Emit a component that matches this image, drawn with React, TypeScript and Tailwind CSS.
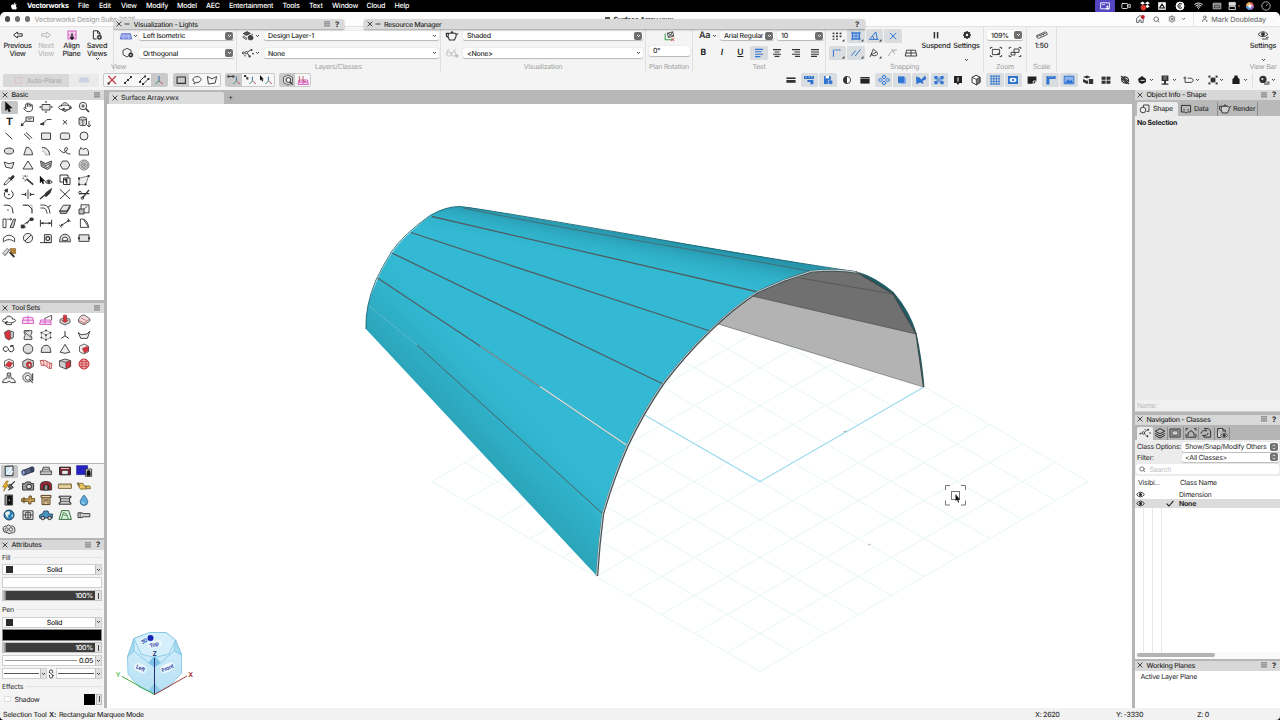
import React from "react";
import { Hand, Search, Wifi, Video, Settings as Gear, User } from "lucide-react";
import { FaApple } from "react-icons/fa";

type Shape = [d: string, fill?: string, stroke?: string, width?: number];

const K = "#333333";
const G = "#dcdcdc";
const N = "none";
const RED = "#d8323f";
const PINK = "#d45fc4";
const BLUE = "#2f74d0";

const c = (x: number, y: number, r: number) =>
  `M${x - r} ${y}a${r} ${r} 0 1 0 ${2 * r} 0a${r} ${r} 0 1 0 ${-2 * r} 0Z`;
const e = (x: number, y: number, a: number, b: number) =>
  `M${x - a} ${y}a${a} ${b} 0 1 0 ${2 * a} 0a${a} ${b} 0 1 0 ${-2 * a} 0Z`;
const r = (x: number, y: number, w: number, h: number) => `M${x} ${y}h${w}v${h}h${-w}Z`;

/* Small drawing on a 16 x 14 board whose origin is the centre */
function Ic({ s, children, className = "" }: { s?: Shape[]; children?: React.ReactNode; className?: string }) {
  return (
    <svg className={"block shrink-0 overflow-visible " + className} width="16" height="14" viewBox="-8 -7 16 14" strokeLinejoin="round">
      {s?.map(([d, f, st, w], i) => (
        <path key={i} d={d} fill={f ?? N} stroke={st ?? K} strokeWidth={w ?? 0.9} />
      ))}
      {children}
    </svg>
  );
}

function Chev({ className = "", color = "#333" }: { className?: string; color?: string }) {
  return (
    <svg className={"block shrink-0 " + className} width="5" height="4" viewBox="0 0 5 4">
      <path d="M1 1l1.5 1.6L4 1" fill="none" stroke={color} strokeWidth="0.9" />
    </svg>
  );
}

const ARROW = "M-3.6 -5.2V3.8L-1.5 2L-.2 5L1.6 4.2L.3 1.4L3.2 1.1Z";
const CUBE = "M0 -5L4.5 -2.8V2.6L0 5L-4.5 2.6V-2.8Z";
const TEAPOT = "M-3.4 -2.8H3L4.2 -1.6L6.2 -2.6M-3.4 -2.8L-5.8 -2.6L-5.4 .6L-3.6 1.4M-3.4 -2.8L-4 .4L-2.6 4H2.4L4 .6L4.2 -1.6M-1.2 -2.8L0 -4.4L1.2 -2.8";

const basic: Shape[][] = [
  [[ARROW, "#111", "#111", 0.3]],
  [],
  [[r(-4, -2.5, 8, 5.5), "#e6e6e6"], ["M0 -6.2l1.3 1.6h-2.6ZM0 6.2l1.3 -1.6h-2.6ZM-7 0l1.8 -1.2v2.4ZM7 0l-1.8 -1.2v2.4Z", K, N]],
  [[e(0, 0.5, 6.5, 2.4), N], ["M-3.8 -.5C-3 -5.5 3 -5.5 3.8 -.5M-3.5 2.5L0 4.6L3.5 2.5", N], ["M-3 2l2.6 -1.4v3ZM6.8 1l-2.6 -1.4l0 3Z", K, N]],
  [[c(-1, -1, 3.7), "#f6f6f6"], ["M1.8 1.8L5 5", N, K, 1.6], ["M-1 -2.8V.8M-2.8 -1H.8"]],
  [],
  [[r(-2, -5, 7.5, 4.4), "#f2f2f2"], ["M-.5 -3.5H4M-.5 -2.2H3", N, K, 0.5], ["M-2 -1.5L-6.5 3.5"], ["M-6.8 4l.4 -2.6l1.8 1.6Z", K]],
  [["M5.5 -2.5H1L-3 1.5"], ["M-5.8 2.2l3.5 -1.6l.2 2.4Z", K]],
  [["M-2.2 -1.8L2.2 2.4M2.2 -1.8L-2.2 2.4", N, K, 1]],
  [["M-5 -3.2C-5 -5.5 2.5 -5.5 2.5 -3.2V2C2.5 4.2 -5 4.2 -5 2Z", "#d4d4d4"], ["M-5 -3.2C-4 -1.5 1.5 -1.5 2.5 -3.2M-1.2 -2V3.6", N, K, 0.7], ["M5 -1V4.6M3 2.8L5 5L7 2.8"]],
  [["M-3.5 -3.2L3.3 3.2", N, K, 1]],
  [["M-4 -2.2L2 3.6M-2 -3.6L4.2 2.4", N, K, 1]],
  [[r(-4.5, -3, 9, 6.4), "#e9e9e9"]],
  [["M-3 -3H3Q4.6 -3 4.6 -1.4V1.8Q4.6 3.4 3 3.4H-3Q-4.6 3.4 -4.6 1.8V-1.4Q-4.6 -3 -3 -3Z", "#e9e9e9"]],
  [[c(0, 0, 4), "#efefef"]],
  [[e(0, 0, 4.6, 3), G]],
  [["M-4.2 3.8L-1.5 -4Q4 -3 4.6 3.8Z", "#e9e9e9"]],
  [["M-4 -3.6C1 -3.4 3.5 0 3.6 4L-.4 4C-.5 1.8 -2 .3 -4 .2", "#ececec", "#999", 0.7], ["M-4 -3.6C1 -3.4 3.5 0 3.6 4"]],
  [["M-5.5 -1.5Q-1 4.5 2 -1Q3.4 -4 .4 -3.2C-1.4 -2.4 0 3.4 5.5 3", N, K, 1]],
  [["M-4.8 4V0L-3 -3.6L-1 -1.4L1 -2.6Q4.8 -3 4.6 4Z", "#efefef"]],
  [["M-4.8 -3L0 -1.2L5 -2.6L3 3.4L-3.2 2.2Z", "#eee"]],
  [["M0 -4L5 4H-5Z", "#efefef"]],
  [["M-5.4 -4L-.4 -1.4L5.5 -4L4.8 2L1.5 4.5L-4.6 1.4Z", "#bdbdbd"], ["M-3.4 -1.6L0 .8L4 -1.4L3.6 1L1.2 2.6L-3 .4Z", "#e8e8e8", K, 0.7]],
  [["M-2.4 -4H2.4L4.8 0L2.4 4H-2.4L-4.8 0Z", "#e9e9e9"]],
  [[c(0, 0, 5), "#e5e5e5", "#666", 0.8], [c(0.3, 0, 3.5), N, "#666", 0.7], [c(0, 0.2, 2.1), N, "#666", 0.7], [c(0.2, 0, 0.8), N, "#666", 0.7]],
  [["M-5 5L-4.3 2.8L.6 -2L2.2 -.4L-2.8 4.4Z", "#fff"], ["M-.5 -3L3 .5M1 -1.4L3.6 -4.4Q5.6 -4.6 5 -2.6L2 0Z", K]],
  [["M-1.5 -1.2L5.2 4.6", N, K, 1.6], ["M-2.8 -5V-3M-2.8 -.6V1.4M-5.6 -1.8H-3.9M-1.6 -3L-.4 -4M-5 -4.4L-4 -3.4", N, K, 0.9]],
  [["M-6 -4V3L-4.4 1.6L-3.2 4L-2 3.4L-3 1H-1Z", "#111", "#111", 0.3], ["M-.8 2Q3 -2 6.4 2Q3 5.4 -.8 2Z", "#fff"], [c(2.8, 1.8, 1.2), K]],
  [["M-5 -5H3V-2M-5 -5V2H-2", N, K, 1], [r(-1.5, -2, 6.5, 6.5), "#fff", K, 1], ["M-.5 -1L2 3.6V-1Z", K]],
  [["M-5 4.6V-1.8L4.6 -4L3 1L1.2 4.6Z", "#eee", "#777", 0.9], [r(-6, -2.6, 2, 2), K, N], [r(-6, 3.4, 2, 2), K, N], [r(3.6, -5, 2, 2), K, N], [r(0.6, 3.4, 2, 2), K, N]],
  [["M-2.8 -3.2A4.4 4.4 0 1 0 2 -3.4", N, K, 1], ["M-1.6 -5.2L-1.6 -1.8L-4.6 -3.6Z", K], [c(0, 0.5, 0.5), K]],
  [["M0 -4.5V5", N, K, 0.9], ["M-1.8 -1.8V2.6L-4.2 .4ZM1.8 -1.8V2.6L4.2 .4Z", K, N], ["M-6.4 .4H-4M4 .4H6.4", N, K, 1]],
  [["M5.6 -5.4L.2 -1.4L-2 1.6L.4 2.4L4 -1Z", K], ["M-2 1.4L-6 5", N, K, 1.4]],
  [["M-5 -4.6L5 5M5 -4.6L-5 5", N, K, 1]],
  [["M-5 -.4H5.4M-1.6 4L5 -4", N, K, 1.2], [c(-4, -1.4, 1.3)], [c(-1.6, 4, 1.3)]],
  [["M-5.2 -3.8H-1Q3.8 -3.6 4 4.4", N, K, 1], [c(-1, 1, 0.3), K]],
  [["M-5.2 -3.8H4V4.4", N, "#999", 0.7], ["M-5.2 -3.8H0L4 0V4.4", N, K, 1]],
  [["M-5.6 -4H-2Q3.4 -3.6 4 4.6M-5.6 -1H-2Q.6 -.6 1.2 4.6", N, K, 0.9], ["M1.6 -1.4L5 -4", N, K, 1]],
  [["M-5.4 2L-1.6 -3.8H5.2L2 2.2Z", "#e6e6e6"], ["M-5.4 2L-4.6 4.4H1.4L4.8 -1.2L5.2 -3.8L2 2.2H-5.4", "#bbb"]],
  [[r(-3, -4.2, 8, 8), "#f4f4f4"], [r(-5, 0, 5, 5), "#bdbdbd"], ["M0 0L3.4 -2.8", N, K, 0.8]],
  [[r(-6, -4, 3, 8.6), "#fff"], ["M1 4.6L4.6 -3.8H6.6L4.4 4.6Z", "#ccc"], ["M-2 -3.8H2.6M1.2 -5L2.8 -3.8L1.2 -2.6", N, K, 0.8]],
  [["M-6 4H-2M-1.4 1.2L2 -3.8H6", N, K, 0.9], [r(-6.8, 2, 3, 3), K], [r(2.2, -5, 2.6, 2.6), K], ["M-3.6 1L1.4 -2.4", N, K, 1]],
  [["M-5.6 -3.2V3.6M5.6 -3.2V3.6M-5 .2H5", N, K, 1], ["M-5 .2l2.4 -1.4v2.8ZM5 .2l-2.4 -1.4v2.8Z", K, N]],
  [["M-5.6 1.8L-3.4 4.6M2.8 -4.4L5.6 -1M-4 2.6L4 -2.6", N, K, 1], ["M-4.4 3l1 -2.6l1.6 2ZM4.4 -3l-1 2.6l-1.6 -2Z", K, N]],
  [["M-3.6 -4V4.4H4.6L-.6 -4Q3.8 -2 4.6 4.4", N, K, 0.9], ["M-3.6 -4H-1"]],
  [["M-5.6 4.2V0Q0 -5.6 5.6 0V4.2", N, K, 0.9], ["M-4.8 3.2Q0 0 4.8 3.2", N, K, 0.9]],
  [[c(0, 0, 4.6), "#eee"], ["M-3 3L3 -3", N, K, 1]],
  [["M-6 4.6H5M-1.6 4V-3.4H4.4Q5.4 -3.4 5.4 -2V4.6H-1.6Z", "#e5e5e5"], [c(1.8, 0.6, 1.9), "#fff", K, 1.2]],
  [["M-5.4 3.8Q-5.4 -3.8 0 -3.8T5.4 3.8Z", "#ddd"], ["M-2.8 2.4Q-2.8 -1 0 -1T2.8 2.4Z", "#fff"]],
  [[r(-5, -3.2, 10, 6.6), "#e2e2e2"], [r(-6, -0.8, 2, 2), K, N], [r(4, -0.8, 2, 2), K, N]],
  [["M-6.4 1.5L-2 -3.6L.4 -1.6L-3.6 3.4ZM-4.5 3.8L1.8 -3.8", "#ddd", "#777"], [r(1.6, -3.4, 5, 5), "#b68436", "#7c5a24", 0.6], ["M.6 .2L5.4 5", N, K, 1.8]],
];

const sets: Shape[][] = [
  [[e(0, 0.6, 6.6, 2.2)], ["M-3.6 -.8C-3.4 -5 3.4 -5 3.6 -.8M-2.6 2.8V4.6H2.6V2.8", "#eee"], ["M-1.6 1L-4 4Z", K]],
  [["M-4.6 -2.6H4.6L5.8 3.4H-5.8ZM-5.2 .2H5.2M0 -4.6V3.4", "#fbe6f6", PINK, 1]],
  [["M-5.4 0H4.2L5.4 4.4H-6.4ZM-5.8 2H5M-1 -2V4.4", "#fbe6f6", PINK, 1], ["M-1.6 -1.4L3.4 -3.8L5.6 -4.6V.4", N, "#555", 1]],
  [["M-5 -.6L0 -2.6L5 -.6V2.6L0 5L-5 2.6Z", "#ccc", "#555"], ["M-1.6 -4.8H1.6V.4H3L0 2.6L-3 .4H-1.6Z", RED, "#822", 0.5]],
  [["M-5.6 0Q-4 -5.4 .8 -4.8L5.8 -1.2V1L0 4.8L-5.4 2Z", "#f4dada", "#555"], ["M-5 .6L.2 3L5.2 -.6M0 2.8V4.6M-3 -2L2.4 .6", N, "#a55", 0.7]],
  [["M-4.6 -2.6L-.6 -4.8L4.6 -2.8L4.2 2.6L-.2 5L-3.4 3Z", RED, "#555"], ["M1.2 -4L4.6 -2.8L4.2 2.6L2 3.8Z", "#ccc", "#555", 0.7]],
  [["M-3.8 -4.4H3.8V-2Q1.6 0 3.8 2.4V4.6H-3.8V2Q-1.8 0 -3.8 -2.2Z", "#ddd", "#444"], ["M-3.6 -3L3.6 2.8M-3.6 -4L1 -4", N, "#444", 0.8]],
  [["M-4.6 -2.4L0 -4.6L4.6 -2.4V2.6L0 4.8L-4.6 2.6ZM-4.6 -2.4L0 0L4.6 -2.4M0 0V4.8", "#f4f4f4", "#777", 0.7], [c(-4.6, -2.4, 0.9), K, N], [c(4.6, -2.4, 0.9), K, N], [c(0, -4.6, 0.9), K, N], [c(0, 4.8, 0.9), K, N], [c(-4.6, 2.6, 0.9), K, N], [c(4.6, 2.6, 0.9), K, N], [c(0, 0, 0.9), K, N]],
  [["M0 -4V.8L-3.8 3.4M0 .8L3.8 3.4", N, K, 1]],
  [["M-5.8 -2.4L-2.8 -.2L3 -1L5.8 -3.8L3.4 3.4H-3.2Z", "#eee"]],
  [["M-1.4 1.4A2.4 2.4 0 1 1 -1.6 -1.6C-.6 -1 -.6 1 .4 2.2A2.8 2.8 0 1 0 1 -2.6Q2.4 -4.6 5 -3", N, K, 1]],
  [[c(0, 0, 4.8), "#ddd"], ["M-4 2.4Q0 5.4 4 2.4", N, "#999", 0.7]],
  [["M-4.8 3.4Q-4.8 -3.8 0 -3.8T4.8 3.4Z", "#ddd"]],
  [["M0 -4.6L4.8 3.2Q0 5.4 -4.8 3.2Z", "#eee"]],
  [[CUBE, "#eee", "#555"], ["M-1.6 -.6L3.2 -2.6L4.4 -1V1.6L.4 4Z", RED, "#822", 0.5]],
  [[CUBE, "#eee", "#555"], ["M-3.6 1.4L-.6 -2.6L3.8 -1L.8 3.4Z", RED, "#822", 0.5]],
  [["M-5.4 -2.4L-.4 -5.2L5.4 -3.2V2.4L.8 5L-5 2.8Z", "#ccc", "#444"], [e(1, 0.8, 2.6, 3), RED, "#822", 0.6], [e(1.4, 1, 1.2, 1.6), "#eee", "#822", 0.5]],
  [["M-6 -3.4Q-1 -4.6 1.4 -2.4T6 -.6Q5 2.4 5.4 4.6Q2 4.6 .6 2.6T-4.8 1.4Q-4.6 -1 -6 -3.4Z", "#f9dede", "#a33", 0.8], ["M-3 -3.8Q-2 -1 -2 1.6M.6 -3Q1.4 -.4 1 2.6M3.6 -1.2Q3.6 2 3.4 4.2", N, "#c33", 0.7]],
  [["M-5.6 -3.2L0 -5L5.6 -3.4V2.4L1 5L-5.4 2.4Z", "#ccc", "#444"], ["M.8 -1.8L5.6 -3.4V2.4L1 5Z", RED, "#444", 0.6], ["M-5.6 -3.2L.8 -1.8", N, "#444", 0.7]],
  [[c(0, 0, 5), "#f3b1b1", "#c2333a", 1], ["M-5 0H5M-4.2 -2.4H4.2M-4.2 2.4H4.2M-2 -4.6V4.6M2 -4.6V4.6", N, "#c2333a", 0.8]],
  [["M-6.4 4.6Q-5.8 .4 -2.4 .4Q-1.6 -1 -1.6 -5H1.6Q1.6 -1 2.4 .4Q5.8 .4 6.4 4.6H2.2Q0 2 -2.2 4.6Z", "#eee"], ["M0 -3.4V.6", N, K, 1]],
  [[c(-0.6, -0.6, 4.6), "#ddd", "#555"], [c(-0.2, -0.2, 2.4), "#fff", "#555"], ["M1.2 1.4L4.8 4.8M4.6 -4.8V3", N, "#555", 1.2]],
];

const lower: Shape[][] = [
  [["M-3.8 -4.6L4 -5V4.6H-3.8Z", "#cfe6f3", "#333", 1], ["M-2 3L2.6 -4M1 4L4 0", N, "#fff", 1.2]],
  [["M-6 0L3.6 -4L5.6 .4L-3.6 4Z", "#5a6586", "#26304a"], [e(-4.4, 1.6, 1.8, 2.6), "#8fa0cc", "#26304a"], [e(4.4, -1.6, 1.6, 2.6), "#3a4670", "#26304a"]],
  [["M-5.6 2.6V0H-3.6L-2.8 -3.8H3.2L4 0H5.6V3.6H-5.6Z", "#c8c8c8", "#444"], ["M-4 -1.4H4M-5.6 .8H5.6", N, "#666", 0.8]],
  [[r(-5.4, -3.8, 10.8, 7.6), "#8f1f2a", "#222", 1], [r(-3.2, -0.6, 6.4, 4), "#eee", "#222", 0.7], ["M-4 -2.4H4", N, "#eecccc", 1]],
  [[r(-7.4, -5.4, 11, 9), "#2622c4", "#1a1790", 0.6], [r(1.6, -2, 6, 7.4), "#e9e9e9", "#222", 0.8], [c(4.6, 1, 1.6), "#111", "#111"], [r(3, 2, 3.2, 2.4), "#111", "#111"]],
  [["M-2.6 -5L-6.4 1H-3.8L-5.4 5.2L-.4 -1.4H-2.8L-.6 -5Z", "#f0b429", "#7c5a10", 0.6], ["M5.8 -4.6L2 -1M-.6 4.4L2.4 1.4", N, K, 1.1], ["M1 -2L4.4 1.4L1.6 3.4L-.8 .8Z", "#666"]],
  [["M-5.4 -2.4H-2.8L-1.8 -4H2.4L3 -2.4H5.6V4H-5.4Z", "#9a9a9a", "#333", 1], [c(1, 0.6, 2.4), "#ddd", "#222", 1]],
  [["M-5.6 4V-1.4Q-5 -4.4 0 -4.4T5.6 -1.4V4Z", "#9b2530", "#333", 0.9], [r(-2.4, -1, 5, 5), "#555", "#222"], ["M0 -1V4", N, "#ddd", 0.8]],
  [[r(-6.6, -2, 13, 4.4), "#ead7a4", "#6e5a30", 0.9], ["M-4 -2V0M-1 -2V0M2 -2V0M5 -2V0", N, "#6e5a30", 0.5]],
  [["M-6.6 -2.8L-1 -2.6L0 0H5.8L6.6 2.6L-3.4 3.2L-5.6 0Z", "#ecc65c", "#6e5a20", 0.8], ["M-6.6 -3.4L-3.8 0M2 0V2.6", N, "#444", 0.9]],
  [[r(-4, -5, 7.6, 10), "#9a9a9a", "#333"], [r(-1.4, -4, 4, 8.4), "#111", "#111"], ["M-.2 .2H1", N, "#fff", 1]],
  [["M-6.4 -1.2H1V-4H3.4V-1.4H6.6V1.6H3V4H.6V1.6H-6.4Z", "#c39a4f", "#5a431c", 0.8], ["M-4 -3V3.4", N, "#5a431c", 1]],
  [["M-5 -4.6H5V-2.6H4V4.6H-4V-2.6H-5Z", "#e6cfa2", "#5d4523", 1], ["M-4 -2.4H4M-2 -2V4M2 -2V4M0 -1.6L0 2.4M-1.4 0H1.4", N, "#5d4523", 0.8]],
  [["M-6 -3.8H6V-2.4H4.6V2.8H6V4.2H-6V2.8H-4.6V-2.4H-6Z", "#d2d2d2", K, 1], ["M-4.6 -1.2H4.6M-4.6 1.4H4.6", N, K, 0.7]],
  [["M0 -5Q4.2 .2 3.8 1.8A3.8 3.6 0 0 1 -3.8 1.8Q-4.2 .2 0 -5Z", "#59a9d9", "#2d5f85", 0.8], ["M-1.8 1.6Q-1.4 3.4 .4 3.8", N, "#d4ecfa", 0.9]],
  [[c(0, 0, 5), "#2c81b8", "#244560", 1], ["M-4 -1.8Q-1.4 -4.6 1 -3.2L.4 -.6L-1.4 .4L-.2 3.6L-2.6 1.6ZM2.2 .6L4 -.8L3.4 2.6Z", "#e7f2e4", N]],
  [[r(-5, -4.2, 10, 8.6), "#e5e5e5", "#444", 1], ["M0 -4.2V4.4M-5 0H5M-2.6 -2.4H2.6V2.8H-2.6Z", N, "#444", 0.9]],
  [["M-6.4 3V0L-3.6 -1.2L-2 -4H2L3 -1H6.4V3Z", "#4b93bf", "#264a62", 0.9], [c(-3.2, 3, 1.8), "#ccc", "#222"], [c(3.6, 3, 1.8), "#ccc", "#222"]],
  [["M-3.4 -4.4H3.8L6.4 4.4H-6Z", "#e3f1e3", "#3e6f45", 1], ["M-3.6 4.2L-1.6 -2.6L1.6 -1L3.4 4.2M-1.8 -.2L2 .8", N, "#4b9658", 1]],
  [["M-6 -2.2H-1.6V-1.4H5.8V1.8H-1.6V2.6H-6Z", "#d7d7d7", "#444", 1], ["M-3.8 -2.2V2.6", N, "#444", 0.8]],
  [["M-6 0Q-5.4 -3.6 -2.4 -2.8Q-.6 -5.6 1.8 -2.8Q5.6 -3.4 5.8 .4Q6.6 4.4 2.6 3.8Q.2 5.6 -2 3.6Q-6 3.8 -6 0Z", "#e2e2e2", "#444", 1], [c(-2.4, 0.4, 1.6), N, "#444", 0.8], [c(1.8, 0.4, 1.8), N, "#444", 0.8]],
];

function ToolGrid({ icons, selected, kind }: { icons: Shape[][]; selected?: number; kind: string }) {
  return (
    <div className="grid w-[93px] grid-cols-5">
      {icons.map((s, i) => (
        <div key={i} className="flex h-[14.5px] w-[18.6px] items-center justify-center">
          <div className={"flex h-[13.5px] w-[17.5px] items-center justify-center rounded-[1.5px] " + (i === selected ? "bg-[#c3c5c6]" : "")}>
            {kind === "basic" && i === 1 ? (
              <Hand size={10.5} strokeWidth={2} color={K} />
            ) : kind === "basic" && i === 5 ? (
              <span className="font-['Liberation_Sans',sans-serif] text-[10.5px] leading-none font-bold text-[#222]">T</span>
            ) : (
              <Ic s={s} />
            )}
          </div>
        </div>
      ))}
    </div>
  );
}

const X_D = "M-2.4 -2.4L2.4 2.4M2.4 -2.4L-2.4 2.4";

function Close({ minus = false }: { minus?: boolean }) {
  return (
    <svg className="block shrink-0" width={minus ? 15 : 6} height="6" viewBox={minus ? "-3 -3 15 6" : "-3 -3 6 6"}>
      <path d={X_D + (minus ? "M5.5 0h5" : "")} fill="none" stroke="#333" strokeWidth="0.9" />
    </svg>
  );
}

function Bars() {
  return (
    <svg className="block shrink-0" width="6" height="6" viewBox="0 0 6 6">
      <path d="M0 .9H6M0 2.9H6M0 4.9H6" stroke="#555" strokeWidth="0.8" />
    </svg>
  );
}

function Header({ title, help = true }: { title: string; help?: boolean }) {
  return (
    <div className="flex h-[10px] shrink-0 items-center bg-[#d8d8d8] pr-[4px] pb-[0.5px] pl-[2px]">
      <Close />
      <span className="ml-[3.5px] grow text-[7px] font-medium text-[#2c2c2c]">{title}</span>
      <Bars />
      {help && <span className="ml-[5px] text-[7.5px] font-bold text-[#222]">?</span>}
    </div>
  );
}

function Field({ w, children, end = "box" }: { w: string; children: React.ReactNode; end?: "box" | "plain" | "none" }) {
  return (
    <div className={"flex h-[9.5px] shrink-0 items-center rounded-[2px] bg-white pl-[4px] text-[7px] text-[#2b2b2b] shadow-[0_0.5px_1px_rgba(0,0,0,0.25)] " + w}>
      <span className="grow font-medium">{children}</span>
      {end === "box" && (
        <span className="mr-[1px] flex size-[8px] items-center justify-center rounded-[2px] bg-[#6f6f6f]">
          <Chev color="#fff" />
        </span>
      )}
      {end === "plain" && <Chev className="mr-[2px]" />}
    </div>
  );
}

function Group({ w, label, children, line = true }: { w: string; label: string; children: React.ReactNode; line?: boolean }) {
  return (
    <div className={"flex h-[46px] shrink-0 flex-col " + (line ? "border-r border-[#e0e0e0] " : "") + w}>
      <div className="h-[35px]">{children}</div>
      <div className="text-center text-[7px] leading-[9px] text-[#a0a0a0]">{label}</div>
    </div>
  );
}

function Big({ w, icon, a, b, chev = false, dim = false }: { w: string; icon: React.ReactNode; a: string; b?: string; chev?: boolean; dim?: boolean }) {
  return (
    <div className={"flex shrink-0 flex-col items-center pt-[0.5px] text-[7.3px] leading-[8.4px] font-medium whitespace-nowrap " + (dim ? "text-[#b9b9b9] " : "text-[#2a2a2a] ") + w}>
      {icon}
      <span>{a}</span>
      {b && <span>{b}</span>}
      {chev && <Chev className={b ? "-mt-px" : "mt-[8px]"} />}
    </div>
  );
}

function Cell({ s, on = false, children }: { s?: Shape[]; on?: boolean; children?: React.ReactNode }) {
  return (
    <div className="flex h-[14px] w-[18.55px] shrink-0 items-center justify-center">
      <div className={"flex h-[13.5px] w-[17.5px] items-center justify-center rounded-[1.5px] " + (on ? "bg-[#dadddf]" : "")}>
        {children ?? <Ic s={s} />}
      </div>
    </div>
  );
}

function ModeBox({ items, first, w }: { items: Shape[][]; first: number; w: string }) {
  return (
    <div className="flex h-[14px] items-center overflow-hidden rounded-[2px] border border-[#c9c9c9] bg-[#f7f7f7]">
      {items.map((s, i) => (
        <div key={i} className={"flex h-full items-center justify-center " + w + (i === first ? " bg-[#c9c9c9]" : "")}>
          <Ic s={s} />
        </div>
      ))}
    </div>
  );
}

const AXES: Shape[] = [["M0 -4V1", N, "#2f6fb0", 1], ["M0 1L-3.6 4", N, "#2f9e6a", 1], ["M0 1L4 4", N, "#c25b6a", 1]];
const SHIFTED: Shape[] = [["M2.4 -3.4V1", N, "#2f6fb0", 1], ["M2.4 1L-.6 4", N, "#2f9e6a", 1], ["M2.4 1L6 4", N, "#c25b6a", 1]];
const TRI: Shape = ["M5 5.4L7.4 5.4L7.4 3Z", K, N];

const menu: [string, string][] = [
  ["Vectorworks", "w-[51px] font-bold"], ["File", "w-[21px]"], ["Edit", "w-[22px]"], ["View", "w-[25px]"], ["Modify", "w-[31px]"],
  ["Model", "w-[29px]"], ["AEC", "w-[23px]"], ["Entertainment", "w-[53.5px]"], ["Tools", "w-[26.5px]"], ["Text", "w-[23px]"],
  ["Window", "w-[34.5px]"], ["Cloud", "w-[28px]"], ["Help", "w-[20px]"],
];

function MenuBar() {
  return (
    <div className="flex h-[12px] items-center bg-black pb-[0.5px] pl-[9.5px] text-[7.1px] font-medium text-white">
      <FaApple size={8} className="mr-[9.5px]" />
      {menu.map(([t, w]) => (
        <span key={t} className={"shrink-0 whitespace-nowrap " + w}>{t}</span>
      ))}
      <div className="ml-auto flex items-center pr-[6px]">
        <div className="flex h-[12px] w-[20px] items-center justify-center rounded-[1px] bg-[#5346c2]">
          <Ic s={[["M-4.4 -3.2H4.4V2.8H-4.4Z", N, "#fff", 0.9], [c(2.4, 0.4, 1), "#fff", N], [r(1, 1.6, 3, 1.8), "#fff", N], ["M-3 -1.4H0", N, "#fff", 0.7]]} />
        </div>
        <div className="flex w-[22px] justify-center"><Video size={10} strokeWidth={2} /></div>
        <div className="flex w-[15px] justify-center">
          <Ic s={[["M-2.4 -4.4L0 -2.8L-2.4 -1.2L-4.8 -2.8ZM2.4 -4.4L4.8 -2.8L2.4 -1.2L0 -2.8ZM2.4 -1.2L4.8 .4L2.4 2L0 .4Z", "#fff", N], [c(-1.6, 1.6, 2.8), "#d8382c", N]]} />
        </div>
        <div className="flex w-[20px] justify-center"><Ic s={[[r(-3.8, -3.8, 7.6, 7.6), "#fff", N], ["M0 -2L2.4 2H-2.4Z", "#fff", "#111", 1.2]]} /></div>
        <div className="flex w-[15px] justify-center"><Ic s={[[c(0, 0, 4), "#fff", "#fff"], ["M2 -1.8A2.4 2.4 0 1 0 2 1.6M0 -1.4V1.4", N, "#111", 1]]} /></div>
        <div className="flex w-[22px] justify-center"><Wifi size={9} strokeWidth={2.6} /></div>
        <div className="flex w-[15px] justify-center"><Ic s={[[r(-3.8, -2.8, 7.6, 5.6), "#333", "#ddd", 0.8], ["M-3.8 -1.2H3.8M-2.4 .8H2.4", N, "#ddd", 0.8]]} /></div>
        <div className="flex w-[18px] justify-center">
          <Ic s={[["M-4 -3.6H2.4V-.6H-4Z", "#ddd", "#fff", 0.6], ["M-4 .6H2.4V3.6H-4Z", N, "#fff", 0.8], [c(6, 0, 0.8), "#f08a24", N]]} />
        </div>
        <div className="flex w-[16px] justify-center">
          <Ic s={[[c(0, 0, 3.8), "#d66", N], ["M0 0L-3.8 0A3.8 3.8 0 0 1 0 -3.8Z", "#f2b04c", N], ["M0 0L3.8 0A3.8 3.8 0 0 1 0 3.8Z", "#8a6bd8", N], ["M0 0L0 3.8A3.8 3.8 0 0 1 -3.8 0Z", "#4aa5e8", N], [c(0, 0, 1.7), "#fff", N]]} />
        </div>
        <div className="flex w-[16px] justify-center"><Ic s={[[c(0, 0, 4.2), N, "#bbb", 0.9], ["M0 0L1.8 -2", N, "#bbb", 0.9]]} /></div>
      </div>
    </div>
  );
}

function TitleBar() {
  return (
    <div className="relative z-10 flex h-[14px] items-center rounded-tl-[5px] rounded-tr-[5px] bg-[#fcfcfc] pl-[4.5px]">
      <div className="flex gap-[4.5px]">
        <span className="size-[5.5px] rounded-full bg-[#4b4b4b]" />
        <span className="size-[5.5px] rounded-full bg-[#6e6e6e]" />
        <span className="size-[5.5px] rounded-full bg-[#6e6e6e]" />
      </div>
      <span className="ml-[4.5px] w-[570px] text-[7.2px] font-medium text-[#aaaaaa]">Vectorworks Design Suite 2025</span>
      <span className="flex items-center text-[7px] font-bold text-[#333]">
        <span className="mr-[4px] h-[5px] w-[5px] bg-[#555]" />
        Surface Array.vwx
      </span>
      <div className="ml-auto flex items-center text-[7px] text-[#555]">
        <div className="flex w-[17px] justify-center">
          <Ic s={[["M-3.4 3.4V-.6L0 -3.6L3.2 -.6V3.4H1V1H-1V3.4Z", N, "#555", 0.9], [c(2.8, -2, 2), "#c21f30", N]]} />
        </div>
        <div className="flex w-[15px] justify-center"><Search size={7} strokeWidth={2.6} /></div>
        <div className="flex w-[17px] justify-center"><Gear size={8} strokeWidth={2.4} /></div>
        <Chev color="#666" />
        <div className="ml-[7px] h-[14px] w-px bg-[#e4e4e4]" />
        <User size={7.5} strokeWidth={2.4} className="ml-[7px]" />
        <span className="ml-[3px] pr-[14px] text-[7.2px] font-medium tracking-[-0.12px] text-[#777]">Mark Doubleday</span>
      </div>
      <div className="absolute top-[7px] left-[114px] flex h-[10px] w-[230px] items-center rounded-t-[2px] bg-[#d9d9d9] pr-[5px] pl-[2px] text-[7px] font-medium text-[#2b2b2b] shadow-[0_1px_2px_rgba(0,0,0,0.35)]">
        <Close minus />
        <span className="ml-[2.5px] grow">Visualization - Lights</span>
        <Bars />
        <span className="ml-[5px] text-[7.5px] font-bold">?</span>
      </div>
      <div className="absolute top-[7px] left-[364px] flex h-[10px] w-[501px] items-center rounded-t-[2px] bg-[#d9d9d9] pr-[6px] pl-[3px] text-[7px] font-medium text-[#2b2b2b] shadow-[0_1px_2px_rgba(0,0,0,0.35)]">
        <Close minus />
        <span className="ml-[2px] grow tracking-[-0.35px]">Resource Manager</span>
        <span className="text-[7.5px] font-bold">?</span>
      </div>
    </div>
  );
}

const ALIGN: Shape[][] = [
  [["M-4 -3.6H4M-4 -1.2H2.6M-4 1.2H4M-4 3.6H1.4", N, BLUE, 1.1]],
  [["M-4 -3.4H4M-2.4 -1H2.4M-4 1.2H4M-2.4 3.4H2.4", N, K, 1.1]],
  [["M-4 -3.4H4M-1.6 -1H4M-4 1.2H4M-1 3.4H4", N, K, 1.1]],
  [["M-4 -3.4H4M-4 -1H4M-4 1.2H4M-4 3.4H2", N, K, 1.1]],
];

function Ribbon() {
  return (
    <div className="flex h-[46px] shrink-0 border-t border-[#e2e2e2] bg-[#f4f4f4]">
      <div className="flex w-[114px] border-r border-[#e0e0e0]">
        <Big w="ml-[1px] w-[33px]" a="Previous" b="View" icon={<Ic s={[["M-4.4 0L-.6 -3V-1.2H4.2V1.2H-.6V3Z", N, K, 1]]} />} />
        <Big w="w-[24px]" dim a="Next" b="View" icon={<Ic s={[["M4.4 0L.6 -3V-1.2H-4.2V1.2H.6V3Z", N, "#bbb", 1]]} />} />
        <Big w="w-[27px]" a="Align" b="Plane" icon={<Ic s={[[r(-4, -4, 8, 8), "#fbe0f5", PINK, 1.1], ["M0 -4V-1M-4 0H4", N, PINK, 0.8], ["M0 -1.5V4M-2 1.8L0 4.2L2 1.8", N, "#111", 1.3]]} />} />
        <Big w="w-[24px]" a="Saved" b="Views" chev icon={<Ic s={[["M-3.6 -4.2H.8L3 -2V1M-3.6 -4.2V4H-.4M.6 -4.2V-1.8H3", N, K, 1], [c(2.4, 2.2, 2.2), "#444", K, 0.6], [c(2.4, 2.2, 0.8), "#fff", N]]} />} />
      </div>
      <Group w="w-[123px]" label="">
        <div className="flex h-[17px] items-center pl-[4px]">
          <Ic s={[["M-4.4 -2.4H4.4L5.8 3H-5.8Z", "#8ea0ea", "#5a6fc9", 0.8], ["M-2 -2.4L-2.6 3M2 -2.4L2.6 3M-5 .2H5", N, "#c7d0fa", 0.6]]} />
          <Chev className="mr-[1px] ml-[-1px]" />
          <Field w="w-[95px]">Left Isometric</Field>
        </div>
        <div className="flex h-[18px] items-center pl-[6px]">
          <Ic s={[["M-1 -4.6L3 -2.8V1L-1 4L-5 1.6V-2.6Z", N, K, 0.9], [c(2.8, 2, 2.4), K, N], [c(2.8, 2, 0.8), "#fff", N]]} />
          <Field w="ml-[3px] w-[95px]">Orthogonal</Field>
        </div>
        <div className="ml-[-3px] text-[7px] leading-[9px] text-[#a0a0a0]">View</div>
      </Group>
      <Group w="w-[204px]" label="Layers/Classes">
        <div className="flex h-[17px] items-center pl-[3px]">
          <Ic s={[["M-4.8 -2.4L-1 -4.4L2.4 -2.6L-1.6 -.6Z", "#555", K, 0.8], ["M-4.8 0L-1.6 1.8V3.6L-4.8 1.8Z", "#ddd", K, 0.7], [e(2.6, 1.8, 2.6, 2.2), "#444", K, 0.6], ["M0 1L5 -2", N, K, 0.8]]} />
          <Chev className="mr-[4px] ml-[-1px]" />
          <Field w="w-[175px]" end="plain">Design Layer-1</Field>
        </div>
        <div className="flex h-[18px] items-center pl-[3px]">
          <Ic s={[[c(-4.6, 0, 1), N], [c(-1.6, -0.4, 1.2), N], ["M-.4 -1L2.6 -3M-.4 .4L1.4 3.4"], [c(3.4, -3, 1.1), K, N], [c(1.6, 3.4, 1.1), K, N], [c(5, 0.6, 0.9), K, N], [c(-3, 2.8, 0.7), K, N]]} />
          <Chev className="mr-[4px] ml-[-1px]" />
          <Field w="w-[175px]" end="plain">None</Field>
        </div>
      </Group>
      <Group w="w-[205px]" label="Visualization">
        <div className="flex h-[17px] items-center pl-[3px]">
          <Ic s={[[TEAPOT, N, K, 1.1]]} />
          <Field w="ml-[3px] w-[180px]">Shaded</Field>
        </div>
        <div className="flex h-[18px] items-center pl-[3px]">
          <Ic s={[[c(-3.2, 1, 2.2), N, "#bbb"], [c(1.8, 1, 2.2), N, "#bbb"], ["M-5 -.6L-3.4 -3.8M1.8 -1.2L3.2 -4M-1 1H-.4", N, "#bbb"], [c(4.8, 2.8, 1.6), "#bbb", N]]} />
          <Field w="ml-[3px] w-[180px]" end="plain">&lt;None&gt;</Field>
        </div>
      </Group>
      <Group w="w-[47px]" label="Plan Rotation">
        <div className="flex h-[17px] items-center justify-center">
          <Ic s={[["M-3.8 -2.4V3.8H3.4", N, "#3aa655", 1.1], ["M2 5L5.4 2.2M2.6 2L5 5", N, "#d04545", 0.9], ["M-1.6 -2.8L3.8 -4.2L4.6 .2L-.6 1.4ZM-1.6 -2.8L4.6 .2M3.8 -4.2L-.6 1.4", N, "#444", 0.9]]} />
        </div>
        <Field w="ml-[3px] mt-[2px] w-[41px]" end="none">0°</Field>
      </Group>
      <Group w="w-[133px]" label="Text">
        <div className="flex h-[17px] items-center pl-[6px]">
          <span className="w-[13px] text-[9px] font-semibold text-[#333]">Aa</span>
          <Chev className="mr-[3px]" />
          <Field w="w-[54px]">Arial Regular</Field>
          <Field w="ml-[3px] w-[47px]">10</Field>
        </div>
        <div className="flex h-[18px] items-center pl-[1px] text-[8.5px] text-[#222]">
          <Cell><b>B</b></Cell>
          <Cell><i className="font-semibold">I</i></Cell>
          <Cell><u className="font-semibold">U</u></Cell>
          {ALIGN.map((s, i) => <Cell key={i} on={i === 0} s={s} />)}
        </div>
      </Group>
      <Group w="w-[158px]" label="Snapping">
        <div className="flex">
          <div className="w-[96px] pt-[2px] pl-[2px]">
            <div className="flex">
              <Cell s={[[r(-4.4, -3.4, 1.8, 1.6), K, N], [r(-0.9, -3.4, 1.8, 1.6), K, N], [r(2.6, -3.4, 1.8, 1.6), K, N], [r(-4.4, -0.4, 1.8, 1.6), K, N], [r(-0.9, -0.4, 1.8, 1.6), K, N], [r(2.6, -0.4, 1.8, 1.6), K, N], [r(-4.4, 2.6, 1.8, 1.2), K, N], [r(-0.9, 2.6, 1.8, 1.2), K, N], TRI]} />
              <Cell on s={[[r(-3.6, -3, 7, 6), "#a9c4ee", BLUE, 1], ["M-5 -3H5M-5 3H5M-3.6 -4.4V4.4M3.4 -4.4V4.4M0 -3V3M-3 0H3", N, BLUE, 0.8], TRI]} />
              <Cell on s={[["M-4.6 3.4H4.6M-4.6 3.4L1.8 -4L3.4 3.4M0 3.4Q.4 .6 -2 .4", N, BLUE, 1], TRI]} />
              <Cell on s={[["M-3 -3L3.2 3.2M3.2 -3L-3 3.2", N, BLUE, 1]]} />
            </div>
            <div className="mt-[3px] flex">
              <Cell on s={[["M-3.6 3.8V-3H3.6", N, BLUE, 1], ["M-2 -4.4V-1.6M1 -4V-2", N, "#dadddf", 0.7], TRI]} />
              <Cell on s={[["M-4.6 2.6L-.4 -2.4M-.8 3L4.4 -3.6", N, BLUE, 1], TRI]} />
              <Cell s={[["M-4 4L-.6 -4L4 .6Q1 4.6 -2.8 1.4M-3 2L2.6 -1", N, K, 0.9], TRI]} />
              <Cell s={[["M-4.4 3Q-3 -2.4 4 -3.4M-1 -4L1.6 1", N, "#999", 0.8]]} />
              <Cell s={[["M-4.4 -2.8H4.4L5.8 3H-5.8ZM-5.2 0H5.2M0 -2.8V3", N, K, 0.9]]} />
            </div>
          </div>
          <Big w="w-[28px]" a="Suspend" icon={<Ic s={[["M-1.6 -3V3.2M1.6 -3V3.2", N, K, 1.5]]} />} />
          <Big w="w-[33px]" a="Settings" chev icon={<Ic s={[[c(0, 0, 2.2), N, K, 2], ["M0 -4V-2.4M0 4V2.4M-4 0H-2.4M4 0H2.4M-2.8 -2.8L-1.8 -1.8M2.8 2.8L1.8 1.8M-2.8 2.8L-1.8 1.8M2.8 -2.8L1.8 -1.8", N, K, 1.5]]} />} />
        </div>
      </Group>
      <Group w="w-[43px]" label="Zoom">
        <div className="flex h-[16px] items-center pl-[3px]">
          <Field w="w-[36px]">109%</Field>
        </div>
        <div className="mt-[2px] flex pl-[3px]">
          <Cell s={[[r(-3.6, -2.6, 7.2, 5.2), N, K, 0.9], ["M-5.6 -3V-4.6H-3.6M5.6 -3V-4.6H3.6M-5.6 3V4.6H-3.6M5.6 3V4.6H3.6", N, K, 0.9], ["M1 2.6L3.6 .6", N, K, 1]]} />
          <Cell s={[[r(-1, -3, 5, 3.4), N, K, 0.9], [r(-4, 0.4, 4, 2.6), N, K, 0.9], ["M-5.8 -3V-4.6H-3.8M5.8 -3V-4.6H3.8M-5.8 3V4.6H-3.8M5.8 3V4.6H3.8", N, K, 0.9]]} />
        </div>
      </Group>
      <Group w="w-[30px]" label="Scale">
        <Big w="" a="1:50" icon={<Ic s={[["M-5.4 .6L3.4 -3.2Q5.6 -2.6 5.2 -.4L-3.6 3.4Q-5.6 3 -5.4 .6ZM-5 1.6L4 -2M-1 .2V1.6M1.6 -1V.6", "#fff", K, 0.8]]} />} />
      </Group>
      <div className="ml-auto">
        <Group w="w-[34px]" label="View Bar" line={false}>
          <Big w="" a="Settings" chev icon={<Ic s={[["M-5 -.6Q0 -6 5 -.6Q0 4 -5 -.6Z", N, K, 0.9], [c(0, -0.8, 1.5), K], ["M-1 4H5M3 2.4H5.6", N, K, 0.9]]} />} />
        </Group>
      </div>
    </div>
  );
}

const DOT = (x: number, y: number): Shape => [r(x - 1, y - 1, 2, 2), K, N];
const rightModes: [boolean, Shape[]][] = [
  [false, [["M-4.6 -1.8H4.6", N, K, 1.6], ["M-4.6 1.4H4.6", N, K, 2.8]]],
  [true, [["M-5 -4H5V-1H-5Z", BLUE, N], ["M-1.6 0H4.4V4.2H1.4V2H-1.6Z", BLUE, N], ["M-3 -4V-2M0 -4V-2M3 -4V-2", N, "#dadddf", 0.6]]],
  [true, [["M-4 -4H2L3 -3V0H0V4H-4Z", BLUE, N], [r(-2.4, -4, 3.4, 2.4), "#fff", N], [c(2.4, 2.2, 2.4), BLUE, "#dadddf", 0.6]]],
  [false, [[c(0, 0, 3.6), "#fff", K, 0.9], ["M0 -3.6A3.6 3.6 0 0 0 0 3.6Z", K, N]]],
  [false, [[r(-4.6, -3, 9.2, 6.6), "#222", N], ["M-4.6 -1.6H4.6", N, "#eee", 0.6]]],
  [true, [["M0 -5L2 -3L0 -1L-2 -3ZM0 1L2 3L0 5L-2 3ZM-3.6 -2L-1.4 0L-3.6 2L-5.6 0ZM3.6 -2L5.6 0L3.6 2L1.4 0Z", "#bcd2f3", BLUE, 1]]],
  [true, [[r(-2.6, -2.6, 6.6, 6.6), "#8db2ee", N], [r(-4, -3.6, 6.4, 6.4), BLUE, N]]],
  [true, [["M-5 -3.6L-1.6 -2.4L.4 -.6L4 -4.6L5.4 -1L1.6 1L2.6 4L-1 2.4L-4.6 4.2Z", BLUE, N]]],
  [true, [[r(-4.6, -4, 3.2, 3.2), BLUE, N], [r(1.4, -4, 3.2, 3.2), BLUE, N], [r(-4.6, 1, 3.2, 3.2), BLUE, N], [r(1.4, 1, 3.2, 3.2), BLUE, N], ["M-3 0H3M0 -3V3", N, BLUE, 0.9]]],
  [false, [["M-4 -4H4V3H1.4L0 5L-1.4 3H-4Z", "#222", N], ["M0 -2.6V1.6", N, "#fff", 1]]],
  [false, [["M-4 -2.6L0 -4.8L4 -2.8V2.4L.4 4.8L-4 2.4Z", "#fff", K, 1], ["M.2 -.8L4 -2.8V2.4L.4 4.8Z", "#777", K, 0.8], ["M-4 -2.6L.2 -.8", N, K, 0.8]]],
  [true, [["M-3.8 -5V5M-1.2 -5V5M1.4 -5V5M4 -5V5M-5 -3.8H5M-5 -1.2H5M-5 1.4H5M-5 4H5", N, BLUE, 0.8]]],
  [true, [[r(-5, -4, 10, 8), BLUE, N], [e(0, 0, 3.4, 2.2), "#fff", N], [c(0, 0, 1.2), BLUE, N]]],
  [false, [["M-4.4 -3.6H4.4V1L2 3.8H-4.4Z", "#222", N], ["M1 4L1.4 1H4.4", N, "#eee", 0.9]]],
  [true, [["M-4.6 -4H4.6V-1H-1.6V4.4H-4.6Z", BLUE, N], ["M-2 -4V-2.6M0 -4V-2.6M2 -4V-2.6", N, "#dadddf", 0.6]]],
  [true, [[r(-4.8, -3.8, 9.6, 7.6), "#8db2ee", BLUE, 1], ["M-4 3L-1 -.8L1 1L2.4 -.2L4 3Z", BLUE, N]]],
  [false, [["M-5 -3L-1 -4.6L2.6 -3L-1 -1.4ZM-5 -1L-1 .8L0 .4V3.4L-1 4L-5 2Z", K, N], [r(0.8, -1, 4.4, 5), K, N]]],
  [false, [[r(-4.4, -3.4, 4, 3.2), K, N], [r(0.4, -3.4, 4, 3.2), K, N], [r(-4.4, 0.6, 4, 3.2), K, N], [r(0.4, 0.6, 4, 3.2), K, N]]],
  [false, [["M-4 -4L4 4", N, K, 1.2], ["M-2 -3Q4 -4 3.6 1.4ZM-3.4 -1.6Q-3.6 3.4 2 3.4Z", N, K, 1.2]]],
];
const rightDrops: [string, Shape[]][] = [
  ["w-[23px]", [["M-4 -1L0 -4L4 -1V2L0 4L-3 2.6Z", "#222", N], ["M-1.4 .4H2.6", N, "#eee", 0.9]]],
  ["w-[23.5px]", [["M-3.4 -4.6H3.4V1H1V3.4H3.4V4.8H-3.4V3.4H-1V1H-3.4Z", "#333", N], ["M-1.6 -3H1.6M-1.6 -1H1.6", N, "#ddd", 0.6]]],
  ["w-[24px]", [["M-4 -3.6V2.4H2.6L4.4 .2L2.6 -1.8H-1.2", N, K, 0.9], ["M-5.6 -2H-2.6", N, K, 0.8]]],
  ["w-[23.5px]", [DOT(-3.6, -3.4), DOT(3.6, -3.4), DOT(-3.6, 3.4), DOT(3.6, 3.4), [r(-2, -2, 4, 4), "#333", K, 0.8]]],
  ["w-[23px]", [["M-3.6 4V-.6Q-3.6 -1.6 -2 -2L-1.4 -4.4H1.4L2 -2Q3.6 -1.6 3.6 -.6V4Z", "#1c1c1c", N]]],
];

function ModeBar() {
  return (
    <div className="flex h-[18px] shrink-0 items-center bg-[#f4f4f4] pb-[2px] pl-[3px]">
      <div className="mr-[4px] flex h-[13px] w-[96px] items-center overflow-hidden rounded-[2px] bg-[#eaeaea] text-[7px] text-[#aaa]">
        <div className="flex h-full w-[66px] items-center bg-[#d8d8d8]">
          <span className="mr-[4px] ml-[12px] size-[7px] border border-[#e0c4cc]" />
          <span className="ml-[1px]">Auto-Plane</span>
        </div>
        <div className="flex grow justify-center"><Ic s={[["M-4 -2.4H4L5.6 2.6H-5.6Z", "#ccd1e6", N]]} /></div>
      </div>
      <div className="flex gap-[4.5px]">
        <ModeBox w="w-[15.8px]" first={3} items={[
          [["M-3.6 -4L4 4M4 -4L-4 4", N, "#c6444c", 1.3], DOT(-3.4, 3.4)],
          [["M-3.6 3.4L3.6 -3.4", N, K, 0.9], DOT(-3, 3), DOT(0, 0), DOT(3, -3)],
          [["M-5 2L1 -4M-1 4.4L5 -1.6", N, K, 0.9], DOT(-4, 2), DOT(1, -3.6), DOT(-1, 4), DOT(4.4, -1)],
          AXES,
        ]} />
        <ModeBox w="w-[15.4px]" first={0} items={[
          [[r(-4, -3, 8.4, 6.4), N, K, 1.1]],
          [["M-1.6 2.6C-6 1 -4 -3.4 0 -3.4S5.6 .2 2 2Q-1 3 -1.6 2.6Q-2.8 5 -3.6 3.4", N, K, 0.9]],
          [["M-4.6 -3.6L0 -1.2L4.6 -3.4L3.2 3L-3.6 4Z", N, K, 0.9]],
        ]} />
        <ModeBox w="w-[15.8px]" first={0} items={[
          [...SHIFTED, ["M-6 -3.6H0", N, K, 1], DOT(-5.6, -3.6), DOT(-0.6, -3.6)],
          [...SHIFTED, ["M-6 -4.8L-2.4 -2", N, K, 1], DOT(-5, -4), DOT(-2.6, -1.6)],
          [...SHIFTED, ["M-6 -5V.6L-4.8 -.4L-3.8 1.6L-2.8 1L-3.6 -.8H-2.2Z", "#111", N]],
        ]} />
        <ModeBox w="w-[15px]" first={0} items={[
          [[CUBE, "#ddd", "#444", 0.8], [c(0.4, 0, 2.4), "#eee", K, 1], ["M2 2L4.8 4.6", N, K, 1.2]],
          [["M-4 0H4.4L5.4 4.4H-5ZM-4.6 2.2H5M0 0V4.4", "#fbe6f6", PINK, 1], ["M-3.6 -4V2M0 -4L0 1L3 2", N, "#b55", 0.9]],
        ]} />
      </div>
      <div className="ml-auto flex items-center">
        {rightModes.map(([on, s], i) => <Cell key={i} on={on} s={s} />)}
        {rightDrops.map(([w, s], i) => (
          <div key={i} className={"flex shrink-0 items-center " + w}><Ic s={s} /><Chev className="ml-[-1.5px]" /></div>
        ))}
        <div className="mr-[3px] ml-[1px] h-[13px] w-px bg-[#ddd]" />
        <div className="flex items-center"><Ic s={[[c(-1, -0.6, 3.6), "#333", N], [c(-1.6, -1, 1), "#eee", N], ["M0 4H5.6M2.6 2.2H5.6", N, K, 1]]} /><Chev className="mr-[4.5px] ml-[-1.5px]" /></div>
      </div>
    </div>
  );
}

function Drop({ children, end = true, h = "h-[11px]" }: { children: React.ReactNode; end?: boolean; h?: string }) {
  return (
    <div className={"flex items-center border border-[#cfcfcf] bg-white " + h}>
      <div className="flex grow items-center">{children}</div>
      {end && <div className="flex h-full w-[6px] items-center justify-center border-l border-[#bbb] bg-[#e2e2e2]"><Chev /></div>}
    </div>
  );
}

function Opacity() {
  return (
    <div className="flex h-[11px] items-center border border-[#c4c4c4] bg-[#3d3d3d]">
      <div className="h-full w-[3px] bg-linear-to-r from-[#d0d0d0] to-[#777]" />
      <span className="grow pr-[2px] text-right text-[7px] font-medium text-white">100%</span>
      <div className="flex h-full w-[6px] items-center justify-center bg-[#e2e2e2]"><span className="h-[6px] w-px bg-[#444]" /></div>
    </div>
  );
}

function Section({ t, className = "" }: { t: string; className?: string }) {
  return (
    <div className={"flex h-[9px] items-center text-[7px] text-[#333] " + className}>
      {t}
      <span className="ml-[3px] h-px grow bg-[#e3e3e3]" />
    </div>
  );
}

function LeftPanel() {
  return (
    <div className="flex w-[107px] shrink-0 flex-col border-r-[3px] border-[#b5b5b5] bg-[#b5b5b5]">
      <Header title="Basic" help={false} />
      <div className="h-[200px] bg-white"><ToolGrid icons={basic} selected={0} kind="basic" /></div>
      <div className="h-[3px]" />
      <Header title="Tool Sets" help={false} />
      <div className="h-[150px] bg-white"><ToolGrid icons={sets} kind="sets" /></div>
      <div className="mt-px h-[74px] bg-[#f4f4f4]"><ToolGrid icons={lower} selected={0} kind="lower" /></div>
      <div className="h-[2px]" />
      <Header title="Attributes" />
      <div className="grow bg-[#f4f4f4] px-[2px] pt-[2.5px]">
        <Section t="Fill" className="mb-[2.5px]" />
        <Drop><span className="ml-[3px] size-[7px] bg-[#2b2b2b]" /><span className="grow pr-[3px] pl-[4px] text-center text-[7px] font-medium text-[#222]">Solid</span></Drop>
        <div className="mt-[1.5px]"><Drop h="h-[11.5px]" end={false}>{null}</Drop></div>
        <div className="mt-[2px]"><Opacity /></div>
        <Section t="Pen" className="mt-[3.5px] mb-[3px]" />
        <Drop><span className="ml-[3px] size-[7px] bg-[#2b2b2b]" /><span className="grow pr-[3px] pl-[4px] text-center text-[7px] font-medium text-[#222]">Solid</span></Drop>
        <div className="mt-[1.5px] h-[11.5px] border border-[#888] bg-black" />
        <div className="mt-[1.5px]"><Opacity /></div>
        <div className="mt-[2px]">
          <Drop><span className="ml-[2px] h-px grow bg-[#999]" /><span className="mx-[2px] text-[7px] font-medium text-[#222]">0.05</span></Drop>
        </div>
        <div className="mt-[2px] flex items-center">
          <div className="w-[45px]"><Drop><span className="mx-[1px] h-px grow bg-[#555]" /></Drop></div>
          <svg width="9" height="10" viewBox="0 0 9 10"><path d="M2.5 4V2.5a1.6 1.6 0 0 1 3.2 0V4M2.5 6v1.5a1.6 1.6 0 0 0 3.2 0V6M2 3l5 4" fill="none" stroke="#333" strokeWidth="0.9" /></svg>
          <div className="grow"><Drop><span className="mx-[1px] h-px grow bg-[#555]" /></Drop></div>
        </div>
        <Section t="Effects" className="mt-[3px]" />
        <div className="mt-[2.5px] flex h-[11px] items-center text-[7px] text-[#222]">
          <span className="mr-[4px] ml-[2px] size-[6.5px] rounded-[1px] border border-[#ddd] bg-white" />
          <span className="grow">Shadow</span>
          <span className="size-[11px] bg-black" />
          <span className="ml-[1px] flex h-[11px] w-[6px] items-center justify-center border border-[#bbb] bg-[#e2e2e2]"><span className="h-[6px] w-px bg-[#444]" /></span>
        </div>
      </div>
    </div>
  );
}

const RIM = "M597 576Q599 545 603 514Q613 479 627.5 446Q643 413 663 384Q685 355 710 331Q733 308 758 292Q785 279 812 271.5Q836 269 857 272.5";
const SKIN = RIM + "L835 269Q650 238 470 207.5Q448 204 432 214.5Q402 237 392 253Q382 268 376 283Q365 306 366 329Z";

function Drawing() {
  const lines = [];
  for (let i = 0; i <= 10; i++) {
    const dx = 32.82 * i;
    const dy = 18.98 * i;
    lines.push(<path key={"a" + i} d={`M${760 - dx} ${291.8 + dy}L${1088.2 - dx} ${481.6 + dy}`} />);
    lines.push(<path key={"b" + i} d={`M${760 + dx} ${291.8 + dy}L${431.8 + dx} ${481.6 + dy}`} />);
  }
  return (
    <svg className="block" width="1025" height="604" viewBox="107 104 1025 604">
      <defs>
        <linearGradient id="top" gradientUnits="userSpaceOnUse" x1="650" y1="238" x2="643" y2="275">
          <stop offset="0" stopColor="#1f8599" stopOpacity="0.7" />
          <stop offset="0.4" stopColor="#2595aa" stopOpacity="0.3" />
          <stop offset="1" stopColor="#33b9d3" stopOpacity="0" />
        </linearGradient>
        <linearGradient id="bottom" gradientUnits="userSpaceOnUse" x1="481" y1="452" x2="535" y2="401">
          <stop offset="0" stopColor="#22909f" stopOpacity="0.5" />
          <stop offset="0.5" stopColor="#2596a8" stopOpacity="0.22" />
          <stop offset="1" stopColor="#33b9d3" stopOpacity="0" />
        </linearGradient>
        <linearGradient id="cube" x1="0" y1="0" x2="0" y2="1">
          <stop offset="0" stopColor="#d9f1fc" />
          <stop offset="1" stopColor="#b4dff4" />
        </linearGradient>
      </defs>
      <g fill="none" stroke="#e0f4f3" strokeWidth="0.8">{lines}</g>
      <path d="M596 387L760 481.5L924 387" fill="none" stroke="#9ddcf0" strokeWidth="1.2" />
      <path d="M843 432l4 -1M868 545l3 -1" stroke="#aaa" strokeWidth="0.8" />
      <path d="M857 271.5Q876 277 893.5 292Q910 311 916.5 333Q922 358 924.5 387L922 384L912 335L890 296Z" fill="#1f5c63" />
      <path d="M717 324L733 309L757 292L916 333L923.5 387Z" fill="#b3b3b3" />
      <path d="M717 323.5L923.5 387" stroke="#777" strokeWidth="0.7" />
      <path d="M752 296L758 291L800 274L830 270L857 272.5L893 294L916 334Z" fill="#707070" />
      <path d="M800 278L893 294M752 296L916 334" fill="none" stroke="#4d4d4d" strokeWidth="0.7" />
      <path d="M857 272.5L893 294L916 334L923.5 387" fill="none" stroke="#3e4a4c" strokeWidth="1.2" />
      <path d={SKIN} fill="#33b9d3" />
      <path d={SKIN} fill="url(#top)" />
      <path d={SKIN} fill="url(#bottom)" />
      <path d="M366 329Q365 306 376 280Q382 267 392 251Q404 234 430 215.5Q447 206 460 206.5Q480 208.5 640 236Q740 254 857 272" fill="none" stroke="#1d6571" strokeWidth="0.9" />
      <g fill="none" stroke="#4e5f63" strokeWidth="1.3">
        <path d="M463 208Q560 228 690 249.5L812 271.5" strokeWidth="0.8" />
        <path d="M432 216.5L758 292" />
        <path d="M411 232.5L710 331" />
        <path d="M392 253L663 384" />
        <path d="M377.5 278L480 346L627.5 446" />
        <path d="M417 345L603 514" strokeWidth="1" />
        <path d="M369 306L417 345" stroke="#9cc9d2" strokeWidth="0.8" strokeDasharray="1.2 1.2" />
        <path d="M480 346L540 386.5" stroke="#8fa8ac" strokeWidth="1" />
        <path d="M540 386.5L627 445.5" stroke="#dde9e9" strokeWidth="1.3" />
      </g>
      <path d={RIM} fill="none" stroke="#46565a" strokeWidth="2.4" />
      <path d={RIM} fill="none" stroke="#e9f2f2" strokeWidth="0.8" transform="translate(-0.5 -0.3)" />

      {/* View cube */}
      <g fill="none" stroke="#7cc5e3" strokeWidth="0.8" strokeLinejoin="round">
        <path d="M127.5 657L134 638.5L150 632.5H166L175.5 640L181.5 654V673L169 687L154.5 694L139 687L128 674Z" fill="url(#cube)" />
        <path d="M134 638.5L150 632.5H166L175.5 640L169 654L154.5 657.5L141 654Z" fill="#d6f0fb" />
        <path d="M154.5 656L148.5 663L154.5 667L160.5 663Z" fill="#7fc3e6" />
        <path d="M154.5 684L149 690.5L154.5 694L160 690.5Z" fill="#8fcdeb" />
        <path d="M134 638.5L127.5 657L134 651ZM175.5 640L181.5 655L174 651Z" fill="#a9dbf1" />
        <path d="M154.5 657V694M134 651L148.5 663M174 651L160.5 663" />
      </g>
      <rect x="134" y="664" width="13" height="8" rx="4" fill="#edf8fd" transform="rotate(24 140 668)" />
      <rect x="160" y="664" width="15" height="8" rx="4" fill="#edf8fd" transform="rotate(-24 167 668)" />
      <rect x="148" y="641" width="14" height="7" rx="3.5" fill="#edf8fd" transform="rotate(-16 154 644)" />
      <circle cx="150.5" cy="638" r="3" fill="#1522b4" />
      <g fill="#2436a0" fontFamily="Inter, sans-serif" fontSize="5.5" fontWeight="600" textAnchor="middle">
        <text x="140.5" y="670" transform="rotate(24 140.5 668)">Left</text>
        <text x="167.5" y="670" transform="rotate(-24 167.5 668)">Front</text>
        <text x="154" y="646.5" transform="rotate(-20 154 644.5)">Top</text>
        <text x="144" y="643" fontSize="5" transform="rotate(-30 144 641)">3D</text>
      </g>
      <path d="M154.5 658V694.5" stroke="#25306e" strokeWidth="1" />
      <path d="M154.5 694.5L122 676.5" stroke="#3fae3c" strokeWidth="1" />
      <path d="M154.5 694.5L187 676" stroke="#a13a3a" strokeWidth="1" />
      <g fontFamily="Inter, sans-serif" fontSize="6.5" fontWeight="700" textAnchor="middle">
        <text x="118" y="676.5" fill="#66c957">Y</text>
        <text x="190.5" y="677" fill="#a12b2b">X</text>
        <text x="154.5" y="656" fill="#1d2866">Z</text>
      </g>

      {/* Selection cursor */}
      <g fill="none" stroke="#777" strokeWidth="1">
        <path d="M945.5 490V485.5H950M961 485.5H965.5V490M965.5 500.5V505H961M950 505H945.5V500.5" />
        <rect x="951.5" y="491.5" width="8" height="8" />
      </g>
      <path d="M955.5 494V501L957 499.8L958.2 502.4L959.2 501.9L958.1 499.4H960Z" fill="#111" />
    </svg>
  );
}

function Eye() {
  return (
    <svg className="block" width="9" height="7" viewBox="0 0 9 7">
      <path d="M.6 3.5Q4.5 -1.2 8.4 3.5Q4.5 8.2 .6 3.5Z" fill="none" stroke="#222" strokeWidth="0.9" />
      <circle cx="4.5" cy="3.5" r="1.5" fill="#222" />
    </svg>
  );
}

function Combo({ children }: { children: string }) {
  return (
    <div className="flex h-[9.5px] grow items-center rounded-[2px] bg-white pl-[3px] shadow-[0_0.5px_1px_rgba(0,0,0,0.2)]">
      <span className="grow whitespace-nowrap">{children}</span>
      <svg className="mr-[1px] block shrink-0" width="8" height="8" viewBox="0 0 8 8">
        <rect width="8" height="8" rx="2" fill="#6f6f6f" />
        <path d="M2.5 3.2L4 1.7L5.5 3.2M2.5 4.8L4 6.3L5.5 4.8" fill="none" stroke="#fff" strokeWidth="0.8" />
      </svg>
    </div>
  );
}

const navTabs: Shape[][] = [
  [[c(-4.6, 0.6, 0.9), K, N], [c(-1.6, 0, 1.3), N], ["M-.4 -.8L2 -2.8M-.4 1L1.6 2.8", N, K, 0.7], [c(3, -3.2, 1), K, N], [c(2.4, 3.2, 1), K, N], [c(5, 0, 0.8), K, N], [c(0, -3.4, 0.7), K, N]],
  [["M-4.8 -1.8L0 -4.4L4.8 -1.8L0 .8ZM-4.8 .4L0 3L4.8 .4M-4.8 2.4L0 5L4.8 2.4", N, K, 1]],
  [[r(-5, -4, 10, 8), N, K, 1], [r(-3, -2.2, 6, 4.4), "#ccc", K, 0.8]],
  [["M-5 -2.4V-4.4H-3M5 -2.4V-4.4H3M-5 4.2H5V1M-5 4.2V1M-3 3V0L0 -2.4L3 0V3", N, K, 1]],
  [["M-2 -4.4H2.4L4.6 -2V4.2H-2M-5 .6Q-4.6 -3.4 .6 -2L-.8 -3.6M2 0Q2 3 -3.4 2.4L-2 4", N, K, 1]],
  [["M-4.4 -4.4H1L3.4 -2V-.4M-4.4 -4.4V4.4H-1M.8 -4.4V-2H3.4", "#e6e6e6", K, 1], ["M-1.4 2.4Q2.2 -1.2 5.8 2.4Q2.2 6 -1.4 2.4Z", "#eee", K, 0.8], [c(2.2, 2.4, 1.2), K]],
];

function RightPanel() {
  return (
    <div className="flex w-[148px] shrink-0 flex-col border-l-[3px] border-[#b5b5b5] bg-[#b5b5b5]">
      <Header title="Object Info - Shape" />
      <div className="flex h-[16px] items-end bg-[#b9b9b9] text-[7px] font-medium text-[#333]">
        <div className="ml-[2px] flex h-[14.5px] w-[41px] items-center rounded-t-[2px] bg-[#ebebeb]">
          <Ic s={[[c(-2, 1, 2.8), N], ["M-1.6 -2V-4H4V2.4H1.6", N]]} /><span>Shape</span>
        </div>
        <div className="flex h-[14.5px] w-[39px] items-center">
          <Ic s={[["M-4.6 -3.6H4.6V3H1.5L0 4.2L-1.5 3H-4.6ZM-2.6 .8H-1.2M1.4 .8H2.8", N, K, 1]]} /><span>Data</span>
        </div>
        <div className="flex h-[14.5px] w-[41px] items-center border-x border-[#8e8e8e]">
          <Ic className="-ml-px" s={[[TEAPOT, "#d0d0d0", K, 1]]} /><span>Render</span>
        </div>
      </div>
      <div className="flex h-[295.5px] flex-col justify-between bg-[#ebebeb] text-[7px]">
        <span className="pt-[2px] pl-[2px] font-bold text-[#222]">No Selection</span>
        <span className="border-b border-[#d2d2d2] bg-[#f0f0f0] pl-[2px] leading-[11px] text-[#bdbdbd]">Name:</span>
      </div>
      <div className="h-[3px]" />
      <Header title="Navigation - Classes" />
      <div className="flex h-[15px] items-end bg-[#b5b5b5] pl-[2px]">
        {navTabs.map((s, i) => (
          <div key={i} className={"flex h-[13px] w-[15.5px] items-center justify-center " + (i === 0 ? "rounded-t-[2px] bg-[#ededed]" : "border-r border-[#8e8e8e]")}>
            <Ic s={s} />
          </div>
        ))}
      </div>
      <div className="flex h-[212px] flex-col bg-[#ececec] text-[7px] text-[#2a2a2a]">
        <div className="mt-[2px] flex h-[10.5px] items-center pr-[1px] pl-[2px]"><span className="w-[45px] shrink-0 whitespace-nowrap">Class Options:</span><Combo>Show/Snap/Modify Others</Combo></div>
        <div className="flex h-[10.5px] items-center pr-[1px] pl-[2px]"><span className="w-[45px] shrink-0">Filter:</span><Combo>&lt;All Classes&gt;</Combo></div>
        <div className="mx-[1px] mt-[1.5px] flex h-[10px] items-center rounded-[3px] bg-white pl-[3px] text-[#bbb]"><Search size={6.5} strokeWidth={2.8} color="#555" className="mr-[4px]" />Search</div>
        <div className="mt-[1.5px] flex grow flex-col bg-white">
          <div className="flex h-[14px] items-center pl-[3px]"><span className="w-[42px]">Visibi...</span><span>Class Name</span></div>
          <div className="flex h-[9px] items-center pl-[1px]"><Eye /><span className="ml-[34px]">Dimension</span></div>
          <div className="flex h-[9px] items-center bg-[#dcdcdc] pl-[1px] font-bold">
            <Eye />
            <svg className="ml-[21px] block" width="8" height="7" viewBox="0 0 8 7"><path d="M.6 3.6L3 6L7.4 .8" fill="none" stroke="#222" strokeWidth="1.1" /></svg>
            <span className="ml-[5px]">None</span>
          </div>
          <div className="ml-[8px] flex grow gap-[8px]">
            <span className="w-px bg-[#e6e6e6]" /><span className="w-px bg-[#e6e6e6]" /><span className="w-px bg-[#e6e6e6]" />
          </div>
        </div>
      </div>
      <div className="flex h-[7px] items-center bg-[#fafafa] pl-[2px]"><span className="h-[3.5px] w-[78px] rounded-full bg-[#b3b3b3]" /></div>
      <div className="h-[2px]" />
      <Header title="Working Planes" />
      <div className="grow bg-white pt-px pl-[5.5px] text-[7px] text-[#222]">Active Layer Plane</div>
    </div>
  );
}

export default function App() {
  return (
    <div className="h-[720px] w-[1280px] overflow-hidden bg-black font-['Inter','Liberation_Sans',sans-serif] leading-[9px] tracking-[-0.26px] whitespace-nowrap [text-rendering:geometricPrecision]">
      <div className="flex h-full flex-col">
        <MenuBar />
        <TitleBar />
        <Ribbon />
        <ModeBar />
        <div className="flex h-[618px] shrink-0">
          <LeftPanel />
          <div className="flex w-[1025px] shrink-0 flex-col bg-white">
            <div className="flex h-[14px] items-end bg-[#b7b7b7] pl-[2px]">
              <div className="flex h-[12.5px] w-[115px] items-center rounded-t-[2px] bg-[#dcdcdc] pl-[3px] text-[7px] font-medium text-[#333]">
                <Close /><span className="ml-[3px]">Surface Array.vwx</span>
              </div>
              <span className="ml-[4px] pb-[2px] text-[8px] text-[#333]">+</span>
            </div>
            <Drawing />
          </div>
          <RightPanel />
        </div>
        <div className="flex h-[12px] items-center rounded-b-[4px] bg-[#f2f2f2] pl-[3px] text-[7px] font-medium text-[#333]">
          <span className="w-[46px]">Selection Tool</span>
          <b className="w-[10px]">X:</b>
          <span className="w-[976px] tracking-[-0.33px]">Rectangular Marquee Mode</span>
          <span className="w-[81px]">X: 2620</span>
          <span className="w-[81px]">Y: -3330</span>
          <span>Z: 0</span>
        </div>
      </div>
    </div>
  );
}
